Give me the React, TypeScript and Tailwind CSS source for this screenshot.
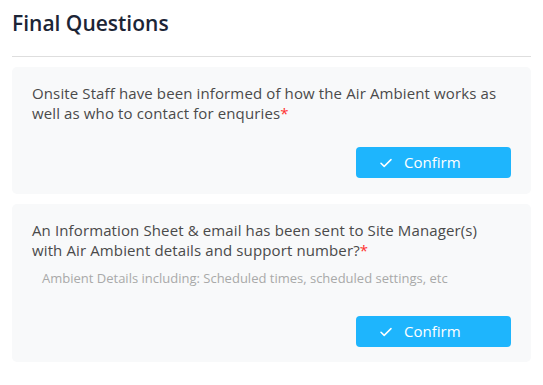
import React from "react";

function Check() {
  return (
    <svg width="12" height="10" viewBox="0 0 12 10" fill="none" className="shrink-0">
      <path d="M1 5.2 L4.2 8.4 L11 1.6" stroke="white" strokeWidth="1.5" strokeLinecap="round" strokeLinejoin="round" />
    </svg>
  );
}

function ConfirmButton() {
  return (
    <div className="flex justify-end">
      <button className="flex h-[31px] w-[155px] items-center gap-[12px] rounded-[4px] bg-[#1eb5fd] pl-[24px] text-[15px] font-medium text-white">
        <Check />
        <span>Confirm</span>
      </button>
    </div>
  );
}

export default function App() {
  return (
    <div className="min-h-screen bg-white px-3 pt-[9px]" style={{ fontFamily: '"Open Sans", sans-serif' }}>
      <h2 className="border-b border-[#dedede] pb-[19px] text-[21px] font-semibold leading-[28px] text-[#1c2536]">
        Final Questions
      </h2>
      <div className="mt-[10px] flex flex-col gap-[10px]">
        <div className="rounded-[5px] bg-[#f8f9fa] px-5 pt-4 pb-4">
          <p className="text-[15px] leading-[20px] tracking-[0.12px] text-[#4a4a4a]">
            Onsite Staff have been informed of how the Air Ambient works as
            <br />
            well as who to contact for enquries
            <span className="text-[#ff3030]">*</span>
          </p>
          <div className="mt-[24px]">
            <ConfirmButton />
          </div>
        </div>
        <div className="rounded-[5px] bg-[#f8f9fa] px-5 pt-4 pb-[15px]">
          <p className="text-[15px] leading-[20px] tracking-[0.12px] text-[#4a4a4a]">
            An Information Sheet &amp; email has been sent to Site Manager(s)
            <br />
            with Air Ambient details and support number?
            <span className="text-[#ff3030]">*</span>
          </p>
          <p className="mt-[9px] pl-[10px] text-[13px] leading-[18px] text-[#a9a9a9]">
            Ambient Details including: Scheduled times, scheduled settings, etc
          </p>
          <div className="mt-[29px]">
            <ConfirmButton />
          </div>
        </div>
      </div>
    </div>
  );
}
